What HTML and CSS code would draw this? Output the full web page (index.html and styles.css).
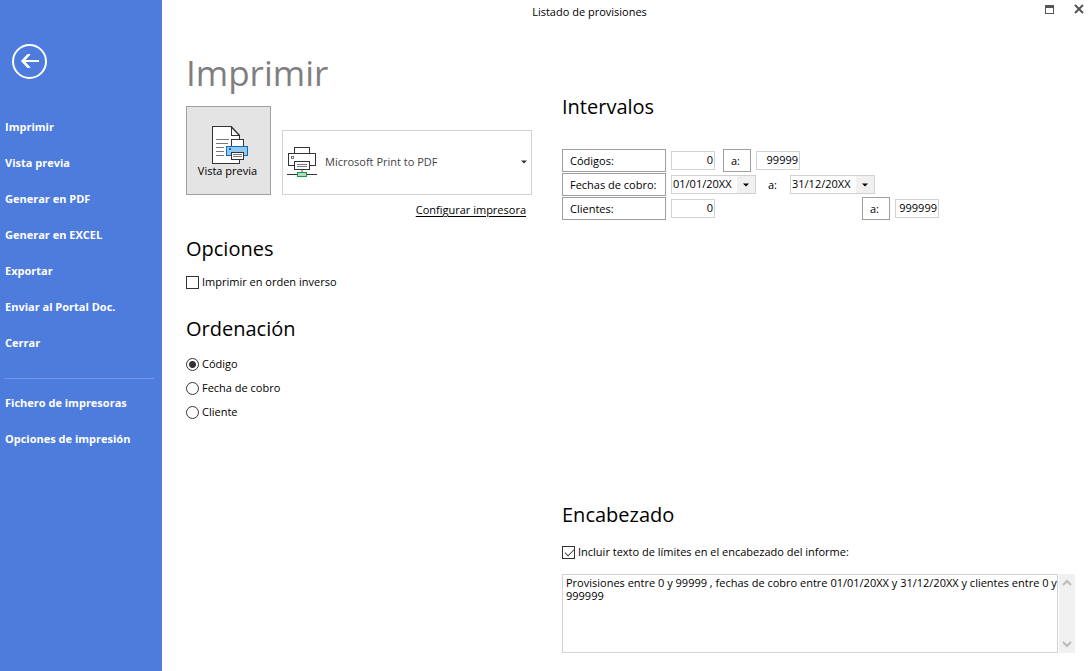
FILE: index.html
```
<!DOCTYPE html>
<html lang="es">
<head>
<meta charset="utf-8">
<title>Listado de provisiones</title>
<link rel="stylesheet" href="styles.css">
</head>
<body>
<div class="app">
  <nav class="sidebar">
    <button class="back" type="button" aria-label="Volver">
      <svg width="36" height="36" viewBox="0 0 36 36" fill="none" stroke="#fff">
        <circle cx="18.500" cy="18.500" r="16.500" stroke-width="2"/>
        <path d="M11 18H28" stroke-width="2"/>
        <path d="M19 11.500h-2.500L10.500 18l6 6.500H19L13 18z" fill="#fff" stroke-width="1"/>
      </svg>
    </button>
    <a class="nav-item" href="#">Imprimir</a>
    <a class="nav-item" href="#">Vista previa</a>
    <a class="nav-item" href="#">Generar en PDF</a>
    <a class="nav-item" href="#">Generar en EXCEL</a>
    <a class="nav-item" href="#">Exportar</a>
    <a class="nav-item" href="#">Enviar al Portal Doc.</a>
    <a class="nav-item" href="#">Cerrar</a>
    <hr class="nav-separator">
    <a class="nav-item" href="#">Fichero de impresoras</a>
    <a class="nav-item" href="#">Opciones de impresión</a>
  </nav>

  <div class="window">
    <header class="titlebar">
      <span class="titlebar-text">Listado de provisiones</span>
      <div class="window-controls">
        <button class="window-button" type="button" aria-label="Maximizar">
          <svg width="9" height="9" viewBox="0 0 9 9" shape-rendering="crispEdges"><path d="M.5 .5h8v8h-8z" fill="none" stroke="#555"/><path d="M0 0h9v3H0z" fill="#555"/></svg>
        </button>
        <button class="window-button" type="button" aria-label="Cerrar ventana">
          <svg width="10" height="10" viewBox="0 0 10 10"><path d="M1 1l8 8M9 1L1 9" stroke="#555" stroke-width="2"/></svg>
        </button>
      </div>
    </header>

    <main class="content">
      <section class="column">
        <h1 class="page-title">Imprimir</h1>
        <div class="print-row">
          <button class="preview" type="button">
            <svg width="36" height="38" viewBox="0 0 36 38" fill="none" stroke="#333" shape-rendering="crispEdges">
              <path d="M.5 .5H19l8.500 9V37.500H.5z" fill="#fff" stroke="none"/>
              <path d="M27.500 34V37.500H.5V.5H19.500V9.500H27.500V13"/>
              <path d="M19 .5L27.500 9.500" stroke-width="1.500" shape-rendering="auto"/>
              <path d="M4 13.500h13M4 17.500h12M4 21.500h8M4 25.500h8M4 29.500h8" stroke="#777"/>
              <path d="M19.500 13.500h12v7h-12z" fill="#fff"/>
              <path d="M14.500 20.500h21v9h-21z" fill="#91c8f0" stroke="#1268b3"/>
              <path d="M17 22h2v2h-2z" fill="#1268b3" stroke="none"/>
              <path d="M19.500 26.500h12v7h-12z" fill="#fff"/>
              <path d="M21 28.500h9M21 30.500h9" stroke="#777"/>
            </svg>
            <span>Vista previa</span>
          </button>
          <div class="printer">
            <svg class="printer-icon" width="30" height="30" viewBox="0 0 30 30" fill="none" stroke="#333" shape-rendering="crispEdges">
              <path d="M7.500 6V.5h15V6"/>
              <path d="M7 18.500H1.500V6.500h27V18.500H23" fill="#fff"/>
              <path d="M4.500 9.500h2v2h-2z" stroke="#777"/>
              <path d="M7.500 14.500h15v8h-15z" fill="#fff"/>
              <path d="M10 17.500h10M10 19.500h10" stroke="#777"/>
              <path d="M15 23v2" stroke="#aaa" stroke-width="2"/>
              <path d="M0 27.500h30"/>
              <path d="M10.500 25.500h9v4h-9z" fill="#b5dcba" stroke="#119a46"/>
            </svg>
            <select class="printer-select" aria-label="Impresora"><option>Microsoft Print to PDF</option></select>
            <svg class="arrow" width="6" height="4" viewBox="0 0 6 4"><path d="M0 .5h6L3 3.500z" fill="#333"/></svg>
          </div>
        </div>
        <a class="configure" href="#">Configurar impresora</a>

        <h2 class="heading heading-options">Opciones</h2>
        <label class="choice"><input class="check" type="checkbox">Imprimir en orden inverso</label>

        <h2 class="heading heading-order">Ordenación</h2>
        <div class="radios">
          <label class="choice"><input class="radio" type="radio" name="orden" checked>Código</label>
          <label class="choice"><input class="radio" type="radio" name="orden">Fecha de cobro</label>
          <label class="choice"><input class="radio" type="radio" name="orden">Cliente</label>
        </div>
      </section>

      <section class="column column-right">
        <h2 class="heading heading-ranges">Intervalos</h2>
        <div class="ranges">
          <div class="range">
            <label class="tag tag-name" for="codigo-desde">Códigos:</label>
            <input class="number" id="codigo-desde" type="text" value="0">
            <label class="tag tag-to" for="codigo-hasta">a:</label>
            <input class="number" id="codigo-hasta" type="text" value="99999">
          </div>
          <div class="range">
            <label class="tag tag-name" for="fecha-desde">Fechas de cobro:</label>
            <div class="date">
              <input class="date-input" id="fecha-desde" type="text" value="01/01/20XX">
              <button class="date-button" type="button" aria-label="Elegir fecha inicial"><svg width="6" height="4" viewBox="0 0 6 4"><path d="M0 .5h6L3 3.500z" fill="#000"/></svg></button>
            </div>
            <label class="plain-to" for="fecha-hasta">a:</label>
            <div class="date">
              <input class="date-input" id="fecha-hasta" type="text" value="31/12/20XX">
              <button class="date-button" type="button" aria-label="Elegir fecha final"><svg width="6" height="4" viewBox="0 0 6 4"><path d="M0 .5h6L3 3.500z" fill="#000"/></svg></button>
            </div>
          </div>
          <div class="range">
            <label class="tag tag-name" for="cliente-desde">Clientes:</label>
            <input class="number" id="cliente-desde" type="text" value="0">
            <label class="tag tag-to tag-far" for="cliente-hasta">a:</label>
            <input class="number" id="cliente-hasta" type="text" value="999999">
          </div>
        </div>

        <div class="header-block">
          <h2 class="heading">Encabezado</h2>
          <label class="choice"><input class="check" type="checkbox" checked>Incluir texto de límites en el encabezado del informe:</label>
          <div class="memo">
            <textarea class="memo-text" aria-label="Texto del encabezado">Provisiones entre 0 y 99999 , fechas de cobro entre 01/01/20XX y 31/12/20XX y clientes entre 0 y 999999</textarea>
            <div class="memo-scroll">
              <svg width="10" height="7" viewBox="0 0 10 7"><path d="M1 6l4-4 4 4" fill="none" stroke="#bbb" stroke-width="2"/></svg>
              <svg width="10" height="7" viewBox="0 0 10 7"><path d="M1 1l4 4 4-4" fill="none" stroke="#bbb" stroke-width="2"/></svg>
            </div>
          </div>
        </div>
      </section>
    </main>
  </div>
</div>
</body>
</html>
```

FILE: styles.css
```
* { box-sizing: border-box; }

body {
  margin: 0;
  background: #fff;
  color: #000;
  font: 11px/16px "Open Sans", "Noto Sans", sans-serif;
}

button, input, select, textarea { font: inherit; color: inherit; margin: 0; }
button { padding: 0; border: 0; background: none; }

.app {
  display: grid;
  grid-template-columns: 162px 1fr;
  min-height: 100vh;
}

/* Sidebar */
.sidebar {
  display: flex;
  flex-direction: column;
  padding-top: 43px;
  background: #4d7cdd;
  color: #fff;
}
.back { width: 36px; height: 36px; margin: 0 0 30px 11px; }
.back svg { display: block; }
.nav-item {
  padding-left: 5px;
  color: #fff;
  font-weight: 700;
  line-height: 36px;
  text-decoration: none;
}
.nav-separator {
  width: auto;
  height: 1px;
  margin: 17px 8px 6px 4px;
  border: 0;
  background: #7397e4;
}

/* Title bar */
.window { display: flex; flex-direction: column; }
.titlebar { display: flex; height: 24px; }
.titlebar-text { flex: 1; line-height: 24px; text-align: center; }
.window-controls {
  display: flex;
  justify-content: flex-end;
  align-items: flex-start;
  gap: 19px;
  width: 75px;
  padding: 4px 8px 0 0;
}
.window-button { width: 10px; height: 10px; }
.window-button svg { display: block; }

/* Content */
.content {
  flex: 1;
  display: grid;
  grid-template-columns: 346px 1fr;
  gap: 30px;
  padding: 0 17px 18px 24px;
}
.column { display: flex; flex-direction: column; align-items: flex-start; }
.column-right { align-items: stretch; }

.page-title {
  margin: 25px 0 9px;
  color: #7f7f7f;
  font-size: 35px;
  font-weight: 400;
  line-height: 48px;
}
.heading { margin: 0; font-size: 20px; font-weight: 400; line-height: 28px; }

.print-row { display: flex; align-items: flex-end; gap: 11px; width: 100%; }
.preview {
  display: flex;
  flex-direction: column;
  align-items: center;
  width: 85px;
  height: 89px;
  padding: 19px 2px 0 0;
  border: 1px solid #a0a0a0;
  background: #e4e4e4;
  line-height: 14px;
}
.preview svg { margin-left: 4px; }
.printer {
  position: relative;
  flex: 1;
  display: flex;
  align-items: center;
  height: 65px;
  padding: 0 0 2px 4px;
  border: 1px solid #d2d2d2;
}
.printer-select {
  flex: 1;
  height: 32px;
  padding-left: 8px;
  border: 0;
  background: none;
  color: #444;
  appearance: none;
}
.arrow { position: absolute; right: 4px; }
.configure {
  align-self: flex-end;
  margin: 7px 6px 17px 0;
  color: #000;
  text-underline-offset: 2px;
}
.heading-options { margin-bottom: 11px; }
.heading-order { margin: 25px 0 13px; }

.choice { display: flex; align-items: center; gap: 3px; }
.check, .radio {
  flex: none;
  width: 13px;
  height: 13px;
  border: 1px solid #333;
  background: #fff;
  appearance: none;
}
.radio { border-radius: 50%; }
.radio:checked { background: radial-gradient(circle, #333 3px, #fff 4px); }
.check:checked { position: relative; }
.check:checked::after {
  content: "";
  position: absolute;
  left: 4px;
  top: 0;
  width: 4px;
  height: 8px;
  border: solid #444;
  border-width: 0 1px 1px 0;
  transform: rotate(45deg);
}
.radios { display: flex; flex-direction: column; gap: 8px; }

/* Ranges */
.heading-ranges { margin: 69px 0 28px; }
.ranges { display: flex; flex-direction: column; gap: 1px; }
.range { display: flex; align-items: center; height: 23px; }
.tag { height: 23px; padding-left: 7px; border: 1px solid #a0a0a0; line-height: 22px; }
.tag-name { width: 104px; margin-right: 5px; white-space: nowrap; }
.tag-to { width: 28px; margin: 0 5px 0 8px; }
.tag-far { margin-left: 147px; }
.plain-to { width: 34px; padding-left: 12px; }
.number {
  width: 44px;
  height: 19px;
  padding: 0 1px 2px;
  border: 1px solid #d2d2d2;
  text-align: right;
}
.date { display: flex; width: 85px; height: 19px; border: 1px solid #d2d2d2; }
.date-input { flex: 1; min-width: 0; padding: 0 0 2px 1px; border: 0; }
.date-button { width: 18px; background: #f0f0f0; }
.date-button svg { display: block; margin: 0 auto; }

/* Report header */
.header-block { margin-top: auto; }
.header-block .heading { margin-bottom: 15px; }
.memo { display: flex; gap: 1px; height: 79px; margin-top: 14px; }
.memo-text {
  flex: 1;
  padding: 1px 0 1px 3px;
  border: 1px solid #d2d2d2;
  line-height: 13px;
  resize: none;
  overflow: hidden;
}
.memo-scroll {
  display: flex;
  flex-direction: column;
  align-items: center;
  justify-content: space-between;
  width: 16px;
  padding: 5px 0;
  background: #f0f0f0;
}
```
